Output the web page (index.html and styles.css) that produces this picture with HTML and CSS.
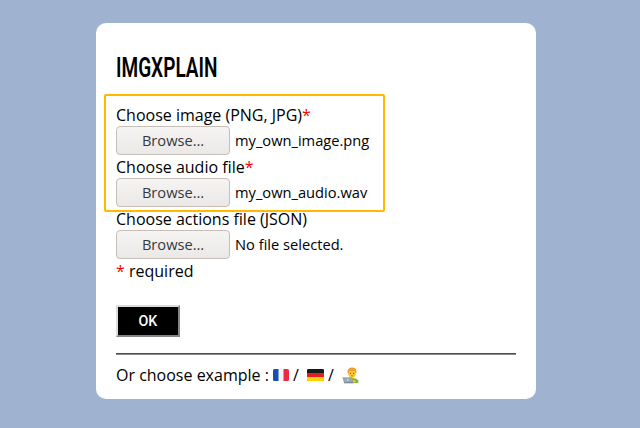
FILE: index.html
```html
<!DOCTYPE html>
<html lang="en">
<head>
<meta charset="utf-8">
<title>IMGXPLAIN</title>
<link rel="stylesheet" href="styles.css">
</head>
<body>
<main class="card">
  <h1 class="title">IMGXPLAIN</h1>
  <form class="form">
    <div class="label">Choose image (PNG, JPG)<span class="star">*</span></div>
    <div class="file"><button type="button" class="browse">Browse…</button><span class="name">my_own_image.png</span></div>
    <div class="label">Choose audio file<span class="star">*</span></div>
    <div class="file"><button type="button" class="browse">Browse…</button><span class="name">my_own_audio.wav</span></div>
    <div class="label">Choose actions file (JSON)</div>
    <div class="file"><button type="button" class="browse">Browse…</button><span class="name">No file selected.</span></div>
    <div class="label"><span class="star">*</span> required</div>
    <div class="highlight"></div>
    <button type="button" class="ok"><span class="ok-text">OK</span></button>
  </form>
  <hr class="rule">
  <div class="examples">
    <span class="intro">Or choose example :</span>
    <svg class="flag" viewBox="0 0 16 12"><rect width="16" height="12" rx="1.5" fill="#f3f3f3"/><path d="M1.5 0H5.5V12H1.5Q0 12 0 10.5V1.5Q0 0 1.5 0" fill="#174fae"/><path d="M10.5 0h4Q16 0 16 1.500V10.500Q16 12 14.500 12h-4z" fill="#eb2943"/></svg>
    <span class="slash">/</span>
    <svg class="flag german" viewBox="0 0 17 12"><rect width="17" height="12" rx="1.500" fill="#e71b22"/><path d="M0 4V1.500Q0 0 1.500 0h14Q17 0 17 1.500V4z" fill="#171a1b"/><path d="M0 8h17v2.500Q17 12 15.500 12h-14Q0 12 0 10.500z" fill="#ffd500"/></svg>
    <span class="slash">/</span>
    <svg class="worker" viewBox="0 0 17 17">
      <path d="M6 16v-3q1-2 4-2 5 0 6.300 2.500V16z" fill="#7cb342"/>
      <path d="M8.500 9h3v3q-1.500 1-3 0z" fill="#e8ae12"/>
      <ellipse cx="10" cy="6.300" rx="4" ry="4.600" fill="#fccb32"/>
      <path d="M5.700 6Q4.800 3 7 1.500 9-.3 12 .8q3.300 1.200 2.300 5.200l-1-.2-.6-2.300Q10 4.400 7.500 3.600L6.700 6z" fill="#f49a28"/>
      <circle cx="8.500" cy="6.300" r=".6" fill="#5d4633"/><circle cx="11.600" cy="6.300" r=".6" fill="#5d4633"/>
      <path d="M8.800 8.600q1.300.7 2.500 0" fill="none" stroke="#a36b24" stroke-width=".7"/>
      <path d="M.3 10.300h9.500l1.200 5.500H2z" fill="#98a8b2"/><path d="M2 15.200h9.800v1.100H2z" fill="#71838e"/>
      <circle cx="5.800" cy="12.900" r=".9" fill="#dbe4e9"/>
      <path d="M10.800 13.500l2-.5 1 1.800-2.400.9z" fill="#fccb32"/>
    </svg>
  </div>
</main>
</body>
</html>
```

FILE: styles.css
```css
* { box-sizing: border-box; }
body {
  margin: 0;
  height: 428px;
  padding-top: 23px;
  overflow: hidden;
  background: #9fb3d1;
  color: #000;
  font: 16px/22px "Open Sans", sans-serif;
}
.card {
  width: 440px;
  height: 376px;
  margin-left: 96px;
  padding: 25px 20px 0;
  border-radius: 10px;
  background: #fff;
}
.title {
  width: max-content;
  margin: 0 0 16px;
  font: 600 28px/40px Roboto, sans-serif;
  transform: scaleX(.68);
  transform-origin: left;
}
.form { position: relative; }
.label { height: 22px; white-space: nowrap; }
.star { color: #f00; }
.file { display: flex; align-items: flex-start; gap: 5px; height: 30px; }
.browse {
  width: 114px;
  height: 29px;
  padding: 0;
  border: 1px solid #c6beb7;
  border-radius: 4px;
  background: linear-gradient(#f5f4f3, #eae9e7);
  color: #36393b;
  font: 14.67px/27px "Open Sans", sans-serif;
}
.name { font-size: 14.67px; line-height: 29px; white-space: nowrap; }
.highlight {
  position: absolute;
  inset: -10px auto auto -12px;
  width: 281px;
  height: 118px;
  border: 2px solid #ffba00;
  border-radius: 2px;
}
.ok {
  display: block;
  width: 64px;
  height: 32px;
  margin-top: 23px;
  padding: 0;
  border: 2px solid;
  border-color: #dcdcdc #858585 #858585 #dcdcdc;
  background: #000;
  color: #fff;
  font: 500 15px/28px Roboto, sans-serif;
}
.ok-text { display: inline-block; transform: scaleX(.95); }
.rule {
  height: 2px;
  margin: 16px 0 9px;
  border: 0;
  border-top: 1px solid #4d4d4d;
  background: #8a8a8a;
}
.examples { display: flex; align-items: center; white-space: nowrap; }
.intro { width: 157px; }
.flag { width: 16px; height: 12px; }
.slash { width: 18px; padding-left: 4px; }
.german { width: 17px; }
.worker { width: 17px; height: 17px; }
```
